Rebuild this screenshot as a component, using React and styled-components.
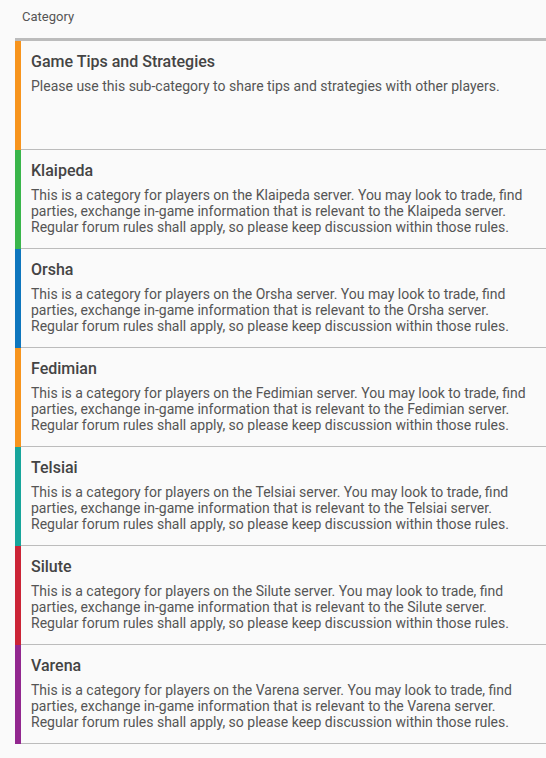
import styled, { createGlobalStyle } from "styled-components";

const GlobalStyle = createGlobalStyle`
  body {
    margin: 0;
    background: #fafafa;
    font-family: Roboto, "Liberation Sans", sans-serif;
  }
`;

const Page = styled.div`
  padding: 8px 0 14px 15px;
`;

const Heading = styled.div`
  font-size: 13px;
  line-height: 18px;
  color: #555;
  padding: 0 0 12px 7px;
`;

const List = styled.ul`
  list-style: none;
  margin: 0;
  padding: 0;
  border-top: 3px solid #bcbcbc;
`;

const Row = styled.li`
  display: flex;
  min-height: ${(p) => p.$minHeight || 0}px;
`;

const Bar = styled.div`
  width: 6px;
  flex: 0 0 6px;
  background: ${(p) => p.$color};
`;

const Body = styled.div`
  flex: 1;
  padding: 10px 20px 13px 10px;
  border-bottom: 1px solid #bcbcbc;
`;

const Title = styled.h3`
  margin: 0 0 6px;
  font-size: 16px;
  line-height: 21px;
  font-weight: 500;
  color: #444;
`;

const Desc = styled.p`
  margin: 0;
  font-size: 14px;
  line-height: 16px;
  color: #555;
`;

const serverDesc = (name) =>
  `This is a category for players on the ${name} server. You may look to trade, find parties, exchange in-game information that is relevant to the ${name} server. Regular forum rules shall apply, so please keep discussion within those rules.`;

const categories = [
  {
    name: "Game Tips and Strategies",
    color: "#f7941d",
    desc: "Please use this sub-category to share tips and strategies with other players.",
    minHeight: 109,
  },
  { name: "Klaipeda", color: "#39b54a" },
  { name: "Orsha", color: "#0e76bd" },
  { name: "Fedimian", color: "#f7941d" },
  { name: "Telsiai", color: "#17a59b" },
  { name: "Silute", color: "#cb2436" },
  { name: "Varena", color: "#92278f" },
];

export default function App() {
  return (
    <Page>
      <GlobalStyle />
      <Heading>Category</Heading>
      <List>
        {categories.map((c) => (
          <Row key={c.name} $minHeight={c.minHeight}>
            <Bar $color={c.color} />
            <Body>
              <Title>{c.name}</Title>
              <Desc>{c.desc || serverDesc(c.name)}</Desc>
            </Body>
          </Row>
        ))}
      </List>
    </Page>
  );
}
